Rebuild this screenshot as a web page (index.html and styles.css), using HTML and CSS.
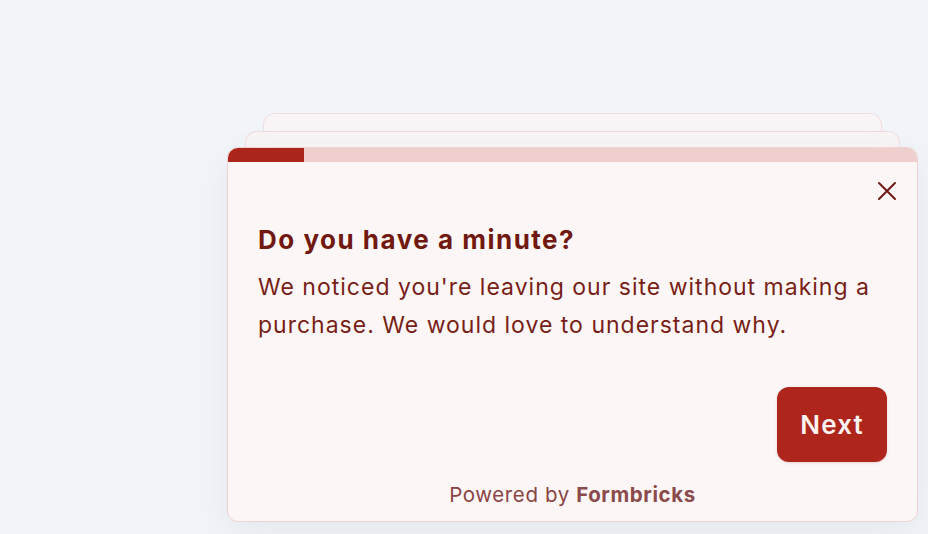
FILE: index.html
```html
<!DOCTYPE html>
<html>
  <head>
    <meta charset="utf-8"/>
    <link rel="stylesheet" href="styles.css">
  </head>
  <body>
    <div class="page">
      <div class="survey-stack">
        <div class="back-card back-card-far"></div>
        <div class="back-card back-card-near"></div>

        <div class="survey-card">
          <div class="progress">
            <div class="progress-fill" style="width:11%"></div>
          </div>

          <div class="close-row">
            <button class="close-btn" aria-label="Close">
              <svg width="24" height="24" viewBox="0 0 24 24" fill="none"
                   stroke="currentColor" stroke-width="2" stroke-linecap="round">
                <path d="M4 4L20 20M20 4L4 20"/>
              </svg>
            </button>
          </div>

          <div class="question">
            <h1 class="headline">Do you have a minute?</h1>
            <p class="subheader">We noticed you're leaving our site without making a purchase. We would love to understand why.</p>
          </div>

          <div class="actions">
            <button class="next-btn">Next</button>
          </div>

          <div class="branding">Powered by <b>Formbricks</b></div>
        </div>
      </div>
    </div>
  </body>
</html>
```

FILE: styles.css
```css
html,
body {
  margin: 0;
  padding: 0;
  height: 100%;
}

body {
  background-color: #f1f4f8;
  font-family: Inter, "Liberation Sans", sans-serif;
  overflow: hidden;
}

.page {
  display: flex;
  padding: 113px 0 0 227px;
}

.survey-stack {
  display: flex;
  flex-direction: column;
  width: 691px;
}

.back-card {
  box-sizing: border-box;
  height: 24px;
  margin-bottom: -6px;
  background-color: #f9f5f6;
  border: 1px solid #efdcde;
  border-bottom: none;
  border-radius: 12px 12px 0 0;
}

.back-card-far {
  margin-left: 36px;
  margin-right: 36px;
}

.back-card-near {
  margin-left: 18px;
  margin-right: 18px;
  height: 22px;
}

.survey-card {
  position: relative;
  box-sizing: border-box;
  height: 375px;
  display: flex;
  flex-direction: column;
  background-color: #fcf7f6;
  border: 1px solid #efd3d3;
  border-radius: 11px;
  overflow: hidden;
  box-shadow: 0 12px 40px rgba(40, 60, 90, 0.06);
}

.progress {
  height: 14px;
  background-color: #eecfcd;
}

.progress-fill {
  height: 100%;
  background-color: #ac251b;
}

.close-row {
  display: flex;
  justify-content: flex-end;
  padding: 17px 18px 0 0;
}

.close-btn {
  display: flex;
  width: 24px;
  height: 24px;
  padding: 0;
  border: none;
  background: none;
  color: #6e1a14;
}

.close-btn svg {
  width: 24px;
  height: 24px;
}

.question {
  padding: 21px 30px 0 30px;
}

.headline {
  margin: 0;
  font-size: 26px;
  line-height: 32px;
  font-weight: 700;
  letter-spacing: 1.5px;
  color: #711811;
}

.subheader {
  margin: 12px 0 0 0;
  font-size: 23px;
  line-height: 38px;
  font-weight: 400;
  letter-spacing: 1px;
  color: #781e17;
}

.actions {
  display: flex;
  justify-content: flex-end;
  padding: 43px 30px 0 30px;
}

.next-btn {
  height: 75px;
  padding: 0 23px;
  border: none;
  border-radius: 12px;
  background-color: #ad251b;
  color: #fdf3f1;
  font-family: inherit;
  font-size: 26px;
  font-weight: 600;
  letter-spacing: 1.2px;
  box-shadow: 0 1px 3px rgba(120, 20, 10, 0.15);
}

.branding {
  padding-top: 19px;
  text-align: center;
  font-size: 20.5px;
  line-height: 28px;
  letter-spacing: 0.6px;
  color: #8a4444;
}

.branding b {
  font-weight: 700;
  color: #8b4a4b;
}
```
